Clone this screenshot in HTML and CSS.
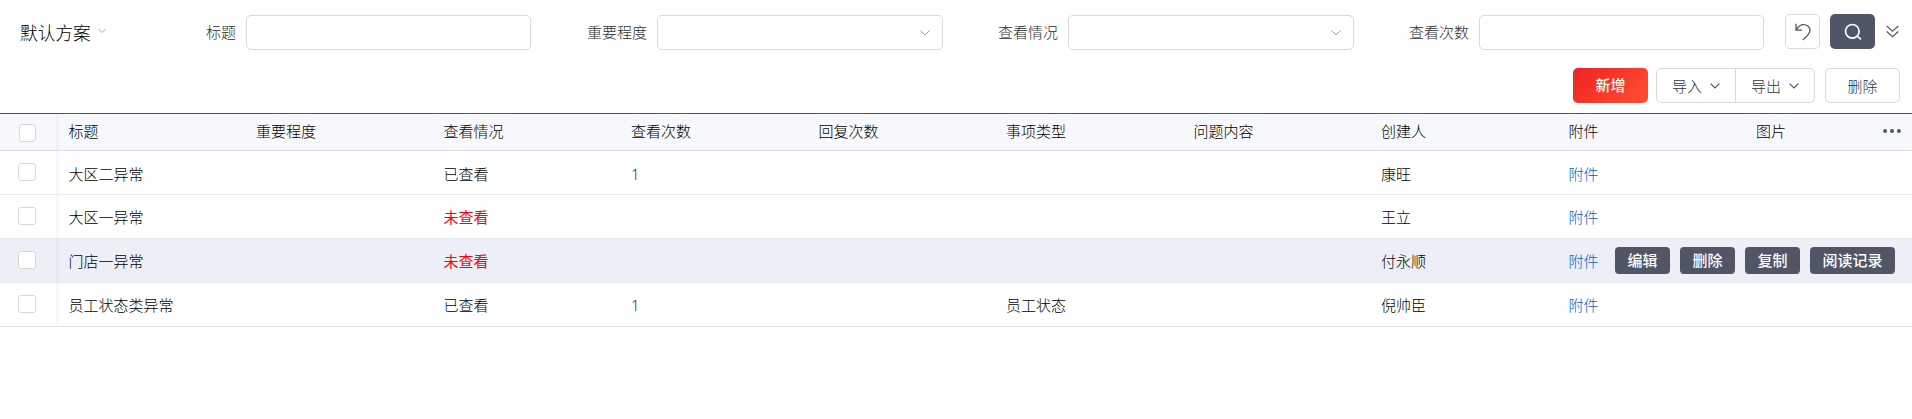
FILE: index.html
```html
<!DOCTYPE html>
<html lang="zh-CN">
<head>
<meta charset="utf-8">
<title>默认方案</title>
<link rel="stylesheet" href="styles.css">
</head>
<body>
<header class="filters">
  <div class="scheme">默认方案<svg class="scheme-arrow" width="8" height="6" viewBox="0 0 8 6"><path d="M.5 1 4 4.5 7.5 1"/></svg></div>
  <div class="field"><label>标题</label><div class="control"></div></div>
  <div class="field select"><label>重要程度</label><div class="control"><svg class="arrow" width="10" height="6" viewBox="0 0 10 6"><path d="M.6.6 5 5 9.4.6"/></svg></div></div>
  <div class="field select"><label>查看情况</label><div class="control"><svg class="arrow" width="10" height="6" viewBox="0 0 10 6"><path d="M.6.6 5 5 9.4.6"/></svg></div></div>
  <div class="field"><label>查看次数</label><div class="control"></div></div>
  <div class="tools">
    <button class="reset"><svg width="16" height="18" viewBox="0 0 16 18"><path d="M1 .8v6.400h6M1 7.200C3.300 3.400 5.800 1.600 8.500 1.600c3.700 0 6.500 2.400 6.500 5.600 0 4-4 6.600-7.200 9.800"/></svg></button>
    <button class="search"><svg width="18" height="18" viewBox="0 0 18 18"><circle cx="8.300" cy="8.300" r="6.800"/><path d="m13.200 13.200 3.800 3.200"/></svg></button>
    <svg class="expand" width="13" height="13" viewBox="0 0 13 13"><path d="m.7 1 5.800 5.200L12.300 1M.7 6.500l5.800 5.300 5.800-5.300"/></svg>
  </div>
</header>
<div class="actions">
  <button class="btn primary">新增</button>
  <div class="group">
    <button class="btn">导入<svg width="10" height="6" viewBox="0 0 10 6"><path d="M.6.6 5 5 9.400.6"/></svg></button>
    <button class="btn">导出<svg width="10" height="6" viewBox="0 0 10 6"><path d="M.6.6 5 5 9.400.6"/></svg></button>
  </div>
  <button class="btn">删除</button>
</div>
<main class="table">
  <div class="row head"><span class="check"><i></i></span><span>标题</span><span>重要程度</span><span>查看情况</span><span>查看次数</span><span>回复次数</span><span>事项类型</span><span>问题内容</span><span>创建人</span><span>附件</span><span class="last">图片<svg class="more" width="18" height="4" viewBox="0 0 18 4"><circle cx="2.100" cy="2" r="2"/><circle cx="9" cy="2" r="2"/><circle cx="15.900" cy="2" r="2"/></svg></span></div>
  <div class="row first"><span class="check"><i></i></span><span>大区二异常</span><span></span><span>已查看</span><span class="num">1</span><span></span><span></span><span></span><span>康旺</span><span class="link">附件</span><span></span></div>
  <div class="row"><span class="check"><i></i></span><span>大区一异常</span><span></span><span class="unread">未查看</span><span></span><span></span><span></span><span></span><span>王立</span><span class="link">附件</span><span></span></div>
  <div class="row hover"><span class="check"><i></i></span><span>门店一异常</span><span></span><span class="unread">未查看</span><span></span><span></span><span></span><span></span><span>付永顺</span><span class="link">附件</span><span></span>
    <div class="row-actions"><button>编辑</button><button>删除</button><button>复制</button><button>阅读记录</button></div></div>
  <div class="row final"><span class="check"><i></i></span><span>员工状态类异常</span><span></span><span>已查看</span><span class="num">1</span><span></span><span>员工状态</span><span></span><span>倪帅臣</span><span class="link">附件</span><span></span></div>
</main>
</body>
</html>
```
FILE: styles.css
```css
* { box-sizing: border-box; }
body {
  margin: 0;
  background: #fff;
  color: #000;
  font: 300 15px/20px "Noto Sans CJK SC", sans-serif;
  overflow: hidden;
}
button { font: inherit; padding: 0; margin: 0; }
svg { fill: none; stroke: currentColor; flex: none; }

.filters { display: flex; align-items: center; height: 65px; padding-left: 20px; }
.scheme { display: flex; align-items: center; width: 180px; padding-bottom: 2px; font-size: 17.700px; }
.scheme-arrow { color: #aaa; margin: 0 0 2px 7px; }
.field { display: flex; align-items: center; justify-content: flex-end; width: 411px; color: #2c2e32; }
.field:nth-child(2) { width: 331px; }
.field label { padding-bottom: 1px; }
.control {
  display: flex; align-items: center; justify-content: flex-end;
  width: 285px; height: 35px; margin-left: 10px; padding-right: 12px;
  border: 1px solid #d9d9d9; border-radius: 5px;
}
.select .control { width: 286px; margin-right: -1px; }
.arrow { color: #989ba2; }
.tools { display: flex; align-items: center; height: 35px; margin: 0 0 2px 21px; color: #505666; }
.reset, .search { display: flex; align-items: center; justify-content: center; height: 35px; border-radius: 5px; color: inherit; }
.reset { width: 35px; background: #fff; border: 1px solid #d9d9d9; margin-right: 10px; }
.reset svg { stroke-width: 1.3; }
.search { width: 45px; background: #505666; border: 0; color: #fff; margin-right: 11px; }
.search svg { stroke-width: 1.7; }
.expand { stroke-width: 1.2; }

.actions { display: flex; justify-content: flex-end; height: 48px; padding: 3px 12px 0 0; }
.btn {
  display: flex; align-items: center; justify-content: center; gap: 8px;
  width: 75px; height: 35px; background: #fff; color: #2c3242;
  border: 1px solid #d9d9d9; border-radius: 5px;
}
.btn svg { color: #505666; stroke-width: 1.200; }
.primary { border: 0; color: #fff; font-weight: 500; background: linear-gradient(135deg, #f02222, #ff4f31); padding-bottom: 2px; }
.group { display: flex; margin: 0 10px 0 8px; }
.group .btn { width: 80px; }
.group .btn:first-child { border-radius: 5px 0 0 5px; }
.group .btn:last-child { border-radius: 0 5px 5px 0; margin-left: -1px; }

.table { border-top: 1px solid #50545c; }
.row { display: grid; grid-template-columns: 56px repeat(9, 187.5px) 1fr; height: 44px; position: relative; }
.row > span { display: flex; align-items: center; padding-left: 12.500px; border-bottom: 1px solid #e8ebee; border-right: 1px solid transparent; background-clip: padding-box; }
.row.first > span:not(.check) { padding-top: 2px; }
.row > .check { padding: 0 0 2px 18px; border-right: 0; }
.check + span { background-image: linear-gradient(90deg, rgba(0,0,0,.035), transparent 5px); }
.check i { width: 18px; height: 18px; border: 1px solid #d8d8d8; border-radius: 3px; background: #fff; }
.row.head { height: 37px; background: #f7f8fc; }
.row.head > span { padding-bottom: 3px; border-bottom-color: #dbe0e5; }
.row.head > .check { padding: 2px 0 0 19px; }
.head .check i { width: 17px; }
.row.hover { background: #eceff6; }
.row.final > span { border-bottom-color: #dee3e7; }
.row > .last { justify-content: space-between; padding-right: 10px; }
.more { fill: #505666; stroke: none; }
.row .unread { color: #f00; font-weight: 400; }
.row .link { color: #005fd0; }
.row .num { color: #333; font-family: "Noto Sans", sans-serif; }
.row-actions { position: absolute; right: 17px; top: 8px; display: flex; gap: 10px; }
.row-actions button { height: 27px; padding: 0 12.500px 2px; border: 0; border-radius: 4px; background: #505666; color: #fff; font-weight: 500; }
```
